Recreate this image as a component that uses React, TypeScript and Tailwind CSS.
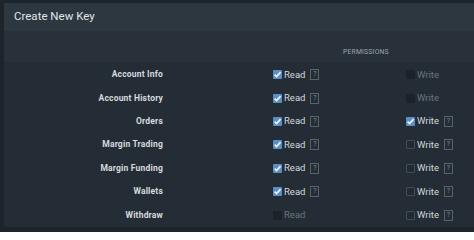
import { clsx } from 'clsx';

interface Perm {
    name: string;
    read: 'on' | 'off' | 'disabled';
    write: 'on' | 'off' | 'disabled';
}

const perms: Perm[] = [
    { name: 'Account Info', read: 'on', write: 'disabled' },
    { name: 'Account History', read: 'on', write: 'disabled' },
    { name: 'Orders', read: 'on', write: 'on' },
    { name: 'Margin Trading', read: 'on', write: 'off' },
    { name: 'Margin Funding', read: 'on', write: 'off' },
    { name: 'Wallets', read: 'on', write: 'off' },
    { name: 'Withdraw', read: 'disabled', write: 'off' },
];

function Box({ state }: { state: 'on' | 'off' | 'disabled' }) {
    if (state === 'on') {
        return (
            <span className="flex h-[9px] w-[9px] items-center justify-center rounded-[1px] bg-[#5b8fc4]">
                <svg viewBox="0 0 10 10" className="h-[9px] w-[9px]">
                    <path d="M1.8 5.2 L4 7.4 L8.4 2.4" fill="none" stroke="#eef3f8" strokeWidth="1.8" />
                </svg>
            </span>
        );
    }
    return (
        <span className={clsx(
            "block h-[9px] w-[9px] rounded-[1px]",
            state === 'off' ? "border border-[#434d56] bg-[#232b32]" : "bg-[#1b2228]"
        )} />
    );
}

function Help() {
    return (
        <span className="ml-[5px] flex h-[11px] w-[9px] items-center justify-center border border-[#58626b] text-[7px] leading-none text-[#7c868f]">
            ?
        </span>
    );
}

function Cell({ state, label }: { state: 'on' | 'off' | 'disabled'; label: string }) {
    return (
        <div className="flex items-center">
            <Box state={state} />
            <span className={clsx(
                "ml-[2px] text-[9.5px]",
                state === 'disabled' ? "text-[#6b747c]" : "text-[#d3d8dd]"
            )}>
                {label}
            </span>
            {state !== 'disabled' && <Help />}
        </div>
    );
}

export default function App() {
    return (
        <div className="h-[232px] w-[474px] overflow-hidden bg-[#1d252c] pt-[3px] pl-[4px]" style={{ fontFamily: 'Roboto, "Liberation Sans", sans-serif' }}>
            <div className="flex h-[28px] items-center bg-[#2c3740] pl-[10px] text-[11.5px] text-[#e1e5e9]">
                Create New Key
            </div>
            <div className="bg-[#28313a]">
                <div className="flex h-[31px] items-end pb-[5px] pl-[339px] text-[6.8px] tracking-[0.2px] text-[#9ba4ac]">
                    PERMISSIONS
                </div>
            </div>
            <div className="bg-[#242d35] pt-[1px]">
                {perms.map((p) => (
                    <div key={p.name} className="flex h-[23.4px] items-center">
                        <div className="w-[159px] text-right text-[8.5px] font-bold tracking-[0.2px] text-[#d6dadf]">
                            {p.name}
                        </div>
                        <div className="ml-[110px] w-[133px]">
                            <Cell state={p.read} label="Read" />
                        </div>
                        <div>
                            <Cell state={p.write} label="Write" />
                        </div>
                    </div>
                ))}
            </div>
        </div>
    );
}
